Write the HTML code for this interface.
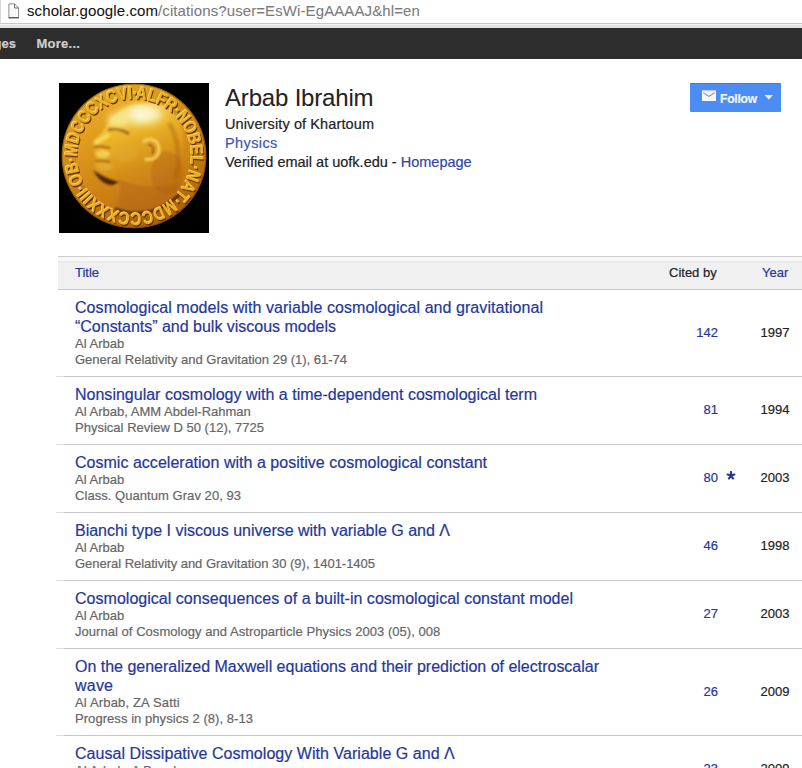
<!DOCTYPE html>
<html><head><meta charset="utf-8">
<style>
html,body{margin:0;padding:0;background:#fff;width:802px;height:768px;overflow:hidden;position:relative;font-family:"Liberation Sans",sans-serif;}
.abs{position:absolute;white-space:nowrap;-webkit-text-stroke:0.2px currentColor;}
#addr{position:absolute;left:0;top:0;width:802px;height:23px;background:#fff;}
#addr .lb{position:absolute;left:0;top:0;width:1px;height:23px;background:#d8d8d8;}
#l1{position:absolute;left:0;top:23px;width:802px;height:1px;background:#c8c8c8;}
#l2{position:absolute;left:0;top:24px;width:802px;height:1px;background:#f4f4f4;}
#l3{position:absolute;left:0;top:25px;width:802px;height:3px;background:#e2e2e2;}
#bar{position:absolute;left:0;top:28px;width:802px;height:31px;background:#2d2d2d;}
#bar .t{position:absolute;top:0px;line-height:31px;-webkit-text-stroke:0.2px currentColor;font-size:13px;font-weight:bold;color:#cfcfcf;}
.url{font-size:15px;line-height:17px;top:2px;letter-spacing:0.1px;-webkit-text-stroke:0.05px currentColor;}
.hd{position:absolute;left:58px;top:256px;width:744px;height:32px;background:linear-gradient(#f7f7f7 0,#f7f7f7 4px,#ebebeb 4px,#ebebeb 6px,#f0f0f0 6px);border-top:1px solid #cdcdcd;border-bottom:1px solid #c8c8c8;}
.hd span{position:absolute;top:0;line-height:32px;font-size:13px;-webkit-text-stroke:0.2px currentColor;}
.sep{position:absolute;left:56px;width:746px;height:1px;background:linear-gradient(90deg,#e0e0e0 0,#e0e0e0 8px,#c9c9c9 8px);}
.ti{font-size:16px;line-height:19px;color:#24379a;}
.au{font-size:13px;line-height:16px;color:#666;}
.num{font-size:13px;line-height:16px;color:#24379a;text-align:right;}
.yr{font-size:13px;line-height:16px;color:#222;text-align:right;}
</style></head><body>
<div id="addr"><div class="lb"></div>
<svg class="abs" style="left:8px;top:2.5px" width="12" height="16" viewBox="0 0 12 16"><path d="M0.9 0.9 H6.6 L10.6 5 V14.6 H0.9 Z" fill="#fdfdfd" stroke="#8a8a8a" stroke-width="1"/><path d="M6.6 0.9 V5 H10.6" fill="none" stroke="#6a6a6a" stroke-width="1"/><path d="M0.6 14.8 H10.9" stroke="#505050" stroke-width="1.2"/><path d="M3 5 V13 M5 5 V13 M7.5 6 V13" stroke="#eeeeee" stroke-width="0.8"/></svg>
<div class="abs url" style="left:27px;color:#111">scholar.google.com<span style="color:#7a7a7a">/citations?user=EsWi-EgAAAAJ&amp;hl=en</span></div>
</div>
<div id="l1"></div><div id="l2"></div><div id="l3"></div>
<div id="bar"><span class="t" style="left:-6.5px">ges</span><span class="t" style="left:36.5px;letter-spacing:0.25px">More...</span></div>
<svg class="abs" style="left:59px;top:83px" width="150" height="150" viewBox="0 0 150 150">
<defs>
<linearGradient id="cg" x1="0.3" y1="0" x2="0.7" y2="1">
<stop offset="0" stop-color="#eeb428"/>
<stop offset="0.45" stop-color="#d89018"/>
<stop offset="0.8" stop-color="#c47612"/>
<stop offset="1" stop-color="#ac600c"/>
</linearGradient>
<linearGradient id="hg" x1="0.2" y1="0" x2="0.5" y2="1">
<stop offset="0" stop-color="#fae468"/>
<stop offset="0.3" stop-color="#eeb82a"/>
<stop offset="0.65" stop-color="#d48e18"/>
<stop offset="1" stop-color="#bc7212"/>
</linearGradient>
<radialGradient id="hl" cx="0.5" cy="0.5" r="0.5">
<stop offset="0" stop-color="#fdfce8" stop-opacity="1"/>
<stop offset="0.5" stop-color="#f8eaa0" stop-opacity="0.85"/>
<stop offset="1" stop-color="#f0c848" stop-opacity="0"/>
</radialGradient>
<filter id="bl" x="-20%" y="-20%" width="140%" height="140%"><feGaussianBlur stdDeviation="1.0"/></filter>
<filter id="bs" x="-5%" y="-5%" width="110%" height="110%"><feGaussianBlur stdDeviation="0.45"/></filter>
<filter id="bl2" x="-30%" y="-30%" width="160%" height="160%"><feGaussianBlur stdDeviation="3"/></filter>
<clipPath id="cc"><circle cx="75" cy="73" r="72.5"/></clipPath>
</defs>
<rect width="150" height="150" fill="#000"/>
<g clip-path="url(#cc)">
<circle cx="75" cy="73" r="72.5" fill="url(#cg)"/>
<g filter="url(#bl)">
<path d="M48 42 C58 24 82 16 104 22 C120 30 127 48 124 68 C121 84 119 98 122 112 C108 126 82 132 56 126 C60 116 60 104 52 98 C44 96 38 92 35 86 C36 80 37 76 36 72 C34 70 35 67 37 65 C34 63 32 60 35 57 C39 54 42 50 44 48 C45 46 46 44 48 42 Z" fill="url(#hg)" opacity="0.9"/>
<path d="M60 96 C76 104 100 106 120 100 L122 112 C108 126 82 132 56 126 C60 116 62 104 60 96 Z" fill="#b86814" opacity="0.55"/>
<path d="M34 86 C42 93 52 96 60 99 C52 106 40 100 34 86 Z" fill="#4a1e02" opacity="0.95"/>
<path d="M56 126 C70 131 90 132 105 123 C112 119 117 115 121 111" fill="none" stroke="#4a2004" stroke-width="2.8" opacity="0.95"/>
<path d="M49 47 C56 45 64 47 70 51" fill="none" stroke="#8a4410" stroke-width="3" opacity="0.75"/>
<path d="M35 64 C40 63 46 64 51 65" fill="none" stroke="#7a3a0a" stroke-width="2" opacity="0.7"/>
<path d="M36 78 C41 77 46 78 51 79" fill="none" stroke="#8a4410" stroke-width="2" opacity="0.6"/>
<path d="M50 51 C46 55 40 58 36 60" fill="none" stroke="#f6d458" stroke-width="4.5"/>
<ellipse cx="44" cy="71" rx="7" ry="4" fill="#f2d056" opacity="0.9"/>
<ellipse cx="46" cy="84" rx="8" ry="3.5" fill="#e8b040" opacity="0.6"/>
<ellipse cx="66" cy="70" rx="13" ry="9" fill="#e6ac34" opacity="0.35"/>
<ellipse cx="108" cy="90" rx="16" ry="22" fill="#a85a10" opacity="0.3"/>
<path d="M84 59 C90 54 100 56 100 66 C100 74 94 78 86 76" fill="none" stroke="#f8d460" stroke-width="2.6"/>
<path d="M89 62 C93 61 96 65 93 71" fill="none" stroke="#7a3e0c" stroke-width="2" opacity="0.7"/>
<path d="M110 40 C120 56 122 78 116 96" fill="none" stroke="#9a5212" stroke-width="5" opacity="0.3"/>
</g>
<ellipse cx="82" cy="32" rx="32" ry="15" fill="url(#hl)" filter="url(#bl2)"/>
<ellipse cx="86" cy="30" rx="15" ry="7" fill="#fcf8d8" opacity="0.6" filter="url(#bl2)"/>
<ellipse cx="59" cy="37" rx="11" ry="7" fill="#f8e890" opacity="0.9" filter="url(#bl2)"/>
<circle cx="75" cy="73" r="65" fill="none" stroke="#000" stroke-opacity="0.06" stroke-width="14"/>
<g font-family="Liberation Sans" font-weight="bold" font-size="18" text-anchor="middle">
<g fill="#5a2804" opacity="0.95" filter="url(#bs)"><text x="0" y="0" transform="translate(83.01,17.75) rotate(7.2) scale(0.822,1)">A</text><text x="0" y="0" transform="translate(92.64,19.81) rotate(17.1) scale(0.822,1)">L</text><text x="0" y="0" transform="translate(101.04,23.14) rotate(26.2) scale(0.822,1)">F</text><text x="0" y="0" transform="translate(109.47,28.23) rotate(36.1) scale(0.822,1)">R</text><text x="0" y="0" transform="translate(115.44,33.25) rotate(43.9) scale(0.822,1)">&#183;</text><text x="0" y="0" transform="translate(120.68,39.03) rotate(51.8) scale(0.822,1)">N</text><text x="0" y="0" transform="translate(126.65,48.36) rotate(62.9) scale(0.822,1)">O</text><text x="0" y="0" transform="translate(130.71,58.67) rotate(74.1) scale(0.822,1)">B</text><text x="0" y="0" transform="translate(132.63,68.75) rotate(84.4) scale(0.822,1)">E</text><text x="0" y="0" transform="translate(132.77,78.19) rotate(93.9) scale(0.822,1)">L</text><text x="0" y="0" transform="translate(131.87,85.11) rotate(100.9) scale(0.822,1)">&#183;</text><text x="0" y="0" transform="translate(129.87,92.65) rotate(108.8) scale(0.822,1)">N</text><text x="0" y="0" transform="translate(125.50,102.39) rotate(119.5) scale(0.822,1)">A</text><text x="0" y="0" transform="translate(119.92,110.51) rotate(129.4) scale(0.822,1)">T</text><text x="0" y="0" transform="translate(115.17,115.61) rotate(136.5) scale(0.822,1)">&#183;</text><text x="0" y="0" transform="translate(108.49,121.06) rotate(145.1) scale(0.822,1)">M</text><text x="0" y="0" transform="translate(98.46,126.65) rotate(156.7) scale(0.822,1)">D</text><text x="0" y="0" transform="translate(88.31,129.93) rotate(167.4) scale(0.822,1)">C</text><text x="0" y="0" transform="translate(77.72,131.27) rotate(178.2) scale(0.822,1)">C</text><text x="0" y="0" transform="translate(67.07,130.61) rotate(188.9) scale(0.822,1)">C</text><text x="0" y="0" transform="translate(57.12,128.12) rotate(199.2) scale(0.822,1)">X</text><text x="0" y="0" transform="translate(48.13,124.08) rotate(209.2) scale(0.822,1)">X</text><text x="0" y="0" transform="translate(39.97,118.55) rotate(219.1) scale(0.822,1)">X</text><text x="0" y="0" transform="translate(34.82,113.82) rotate(226.1) scale(0.822,1)">I</text><text x="0" y="0" transform="translate(32.08,110.76) rotate(230.2) scale(0.822,1)">I</text><text x="0" y="0" transform="translate(29.57,107.50) rotate(234.4) scale(0.822,1)">I</text><text x="0" y="0" transform="translate(27.09,103.73) rotate(238.9) scale(0.822,1)">&#183;</text><text x="0" y="0" transform="translate(23.36,96.41) rotate(247.2) scale(0.822,1)">O</text><text x="0" y="0" transform="translate(20.08,85.83) rotate(258.3) scale(0.822,1)">B</text><text x="0" y="0" transform="translate(19.03,78.10) rotate(266.2) scale(0.822,1)">&#183;</text><text x="0" y="0" transform="translate(19.10,69.48) rotate(274.8) scale(0.822,1)">M</text><text x="0" y="0" transform="translate(21.22,58.20) rotate(286.4) scale(0.822,1)">D</text><text x="0" y="0" transform="translate(25.18,48.29) rotate(297.2) scale(0.822,1)">C</text><text x="0" y="0" transform="translate(30.92,39.29) rotate(307.9) scale(0.822,1)">C</text><text x="0" y="0" transform="translate(38.23,31.52) rotate(318.6) scale(0.822,1)">C</text><text x="0" y="0" transform="translate(46.51,25.46) rotate(329.0) scale(0.822,1)">X</text><text x="0" y="0" transform="translate(55.75,20.98) rotate(339.3) scale(0.822,1)">C</text><text x="0" y="0" transform="translate(65.63,18.23) rotate(349.6) scale(0.822,1)">V</text><text x="0" y="0" transform="translate(72.57,17.40) rotate(356.6) scale(0.822,1)">I</text><text x="0" y="0" transform="translate(77.09,17.31) rotate(361.2) scale(0.822,1)">&#183;</text></g>
<g fill="#ffe470"  filter="url(#bs)"><text x="0" y="0" transform="translate(81.61,15.75) rotate(7.2) scale(0.822,1)">A</text><text x="0" y="0" transform="translate(91.24,17.81) rotate(17.1) scale(0.822,1)">L</text><text x="0" y="0" transform="translate(99.64,21.14) rotate(26.2) scale(0.822,1)">F</text><text x="0" y="0" transform="translate(108.07,26.23) rotate(36.1) scale(0.822,1)">R</text><text x="0" y="0" transform="translate(114.04,31.25) rotate(43.9) scale(0.822,1)">&#183;</text><text x="0" y="0" transform="translate(119.28,37.03) rotate(51.8) scale(0.822,1)">N</text><text x="0" y="0" transform="translate(125.25,46.36) rotate(62.9) scale(0.822,1)">O</text><text x="0" y="0" transform="translate(129.31,56.67) rotate(74.1) scale(0.822,1)">B</text><text x="0" y="0" transform="translate(131.23,66.75) rotate(84.4) scale(0.822,1)">E</text><text x="0" y="0" transform="translate(131.37,76.19) rotate(93.9) scale(0.822,1)">L</text><text x="0" y="0" transform="translate(130.47,83.11) rotate(100.9) scale(0.822,1)">&#183;</text><text x="0" y="0" transform="translate(128.47,90.65) rotate(108.8) scale(0.822,1)">N</text><text x="0" y="0" transform="translate(124.10,100.39) rotate(119.5) scale(0.822,1)">A</text><text x="0" y="0" transform="translate(118.52,108.51) rotate(129.4) scale(0.822,1)">T</text><text x="0" y="0" transform="translate(113.77,113.61) rotate(136.5) scale(0.822,1)">&#183;</text><text x="0" y="0" transform="translate(107.09,119.06) rotate(145.1) scale(0.822,1)">M</text><text x="0" y="0" transform="translate(97.06,124.65) rotate(156.7) scale(0.822,1)">D</text><text x="0" y="0" transform="translate(86.91,127.93) rotate(167.4) scale(0.822,1)">C</text><text x="0" y="0" transform="translate(76.32,129.27) rotate(178.2) scale(0.822,1)">C</text><text x="0" y="0" transform="translate(65.67,128.61) rotate(188.9) scale(0.822,1)">C</text><text x="0" y="0" transform="translate(55.72,126.12) rotate(199.2) scale(0.822,1)">X</text><text x="0" y="0" transform="translate(46.73,122.08) rotate(209.2) scale(0.822,1)">X</text><text x="0" y="0" transform="translate(38.57,116.55) rotate(219.1) scale(0.822,1)">X</text><text x="0" y="0" transform="translate(33.42,111.82) rotate(226.1) scale(0.822,1)">I</text><text x="0" y="0" transform="translate(30.68,108.76) rotate(230.2) scale(0.822,1)">I</text><text x="0" y="0" transform="translate(28.17,105.50) rotate(234.4) scale(0.822,1)">I</text><text x="0" y="0" transform="translate(25.69,101.73) rotate(238.9) scale(0.822,1)">&#183;</text><text x="0" y="0" transform="translate(21.96,94.41) rotate(247.2) scale(0.822,1)">O</text><text x="0" y="0" transform="translate(18.68,83.83) rotate(258.3) scale(0.822,1)">B</text><text x="0" y="0" transform="translate(17.63,76.10) rotate(266.2) scale(0.822,1)">&#183;</text><text x="0" y="0" transform="translate(17.70,67.48) rotate(274.8) scale(0.822,1)">M</text><text x="0" y="0" transform="translate(19.82,56.20) rotate(286.4) scale(0.822,1)">D</text><text x="0" y="0" transform="translate(23.78,46.29) rotate(297.2) scale(0.822,1)">C</text><text x="0" y="0" transform="translate(29.52,37.29) rotate(307.9) scale(0.822,1)">C</text><text x="0" y="0" transform="translate(36.83,29.52) rotate(318.6) scale(0.822,1)">C</text><text x="0" y="0" transform="translate(45.11,23.46) rotate(329.0) scale(0.822,1)">X</text><text x="0" y="0" transform="translate(54.35,18.98) rotate(339.3) scale(0.822,1)">C</text><text x="0" y="0" transform="translate(64.23,16.23) rotate(349.6) scale(0.822,1)">V</text><text x="0" y="0" transform="translate(71.17,15.40) rotate(356.6) scale(0.822,1)">I</text><text x="0" y="0" transform="translate(75.69,15.31) rotate(361.2) scale(0.822,1)">&#183;</text></g>
<g fill="#eaac24"  filter="url(#bs)"><text x="0" y="0" transform="translate(82.11,16.45) rotate(7.2) scale(0.822,1)">A</text><text x="0" y="0" transform="translate(91.74,18.51) rotate(17.1) scale(0.822,1)">L</text><text x="0" y="0" transform="translate(100.14,21.84) rotate(26.2) scale(0.822,1)">F</text><text x="0" y="0" transform="translate(108.57,26.93) rotate(36.1) scale(0.822,1)">R</text><text x="0" y="0" transform="translate(114.54,31.95) rotate(43.9) scale(0.822,1)">&#183;</text><text x="0" y="0" transform="translate(119.78,37.73) rotate(51.8) scale(0.822,1)">N</text><text x="0" y="0" transform="translate(125.75,47.06) rotate(62.9) scale(0.822,1)">O</text><text x="0" y="0" transform="translate(129.81,57.37) rotate(74.1) scale(0.822,1)">B</text><text x="0" y="0" transform="translate(131.73,67.45) rotate(84.4) scale(0.822,1)">E</text><text x="0" y="0" transform="translate(131.87,76.89) rotate(93.9) scale(0.822,1)">L</text><text x="0" y="0" transform="translate(130.97,83.81) rotate(100.9) scale(0.822,1)">&#183;</text><text x="0" y="0" transform="translate(128.97,91.35) rotate(108.8) scale(0.822,1)">N</text><text x="0" y="0" transform="translate(124.60,101.09) rotate(119.5) scale(0.822,1)">A</text><text x="0" y="0" transform="translate(119.02,109.21) rotate(129.4) scale(0.822,1)">T</text><text x="0" y="0" transform="translate(114.27,114.31) rotate(136.5) scale(0.822,1)">&#183;</text><text x="0" y="0" transform="translate(107.59,119.76) rotate(145.1) scale(0.822,1)">M</text><text x="0" y="0" transform="translate(97.56,125.35) rotate(156.7) scale(0.822,1)">D</text><text x="0" y="0" transform="translate(87.41,128.63) rotate(167.4) scale(0.822,1)">C</text><text x="0" y="0" transform="translate(76.82,129.97) rotate(178.2) scale(0.822,1)">C</text><text x="0" y="0" transform="translate(66.17,129.31) rotate(188.9) scale(0.822,1)">C</text><text x="0" y="0" transform="translate(56.22,126.82) rotate(199.2) scale(0.822,1)">X</text><text x="0" y="0" transform="translate(47.23,122.78) rotate(209.2) scale(0.822,1)">X</text><text x="0" y="0" transform="translate(39.07,117.25) rotate(219.1) scale(0.822,1)">X</text><text x="0" y="0" transform="translate(33.92,112.52) rotate(226.1) scale(0.822,1)">I</text><text x="0" y="0" transform="translate(31.18,109.46) rotate(230.2) scale(0.822,1)">I</text><text x="0" y="0" transform="translate(28.67,106.20) rotate(234.4) scale(0.822,1)">I</text><text x="0" y="0" transform="translate(26.19,102.43) rotate(238.9) scale(0.822,1)">&#183;</text><text x="0" y="0" transform="translate(22.46,95.11) rotate(247.2) scale(0.822,1)">O</text><text x="0" y="0" transform="translate(19.18,84.53) rotate(258.3) scale(0.822,1)">B</text><text x="0" y="0" transform="translate(18.13,76.80) rotate(266.2) scale(0.822,1)">&#183;</text><text x="0" y="0" transform="translate(18.20,68.18) rotate(274.8) scale(0.822,1)">M</text><text x="0" y="0" transform="translate(20.32,56.90) rotate(286.4) scale(0.822,1)">D</text><text x="0" y="0" transform="translate(24.28,46.99) rotate(297.2) scale(0.822,1)">C</text><text x="0" y="0" transform="translate(30.02,37.99) rotate(307.9) scale(0.822,1)">C</text><text x="0" y="0" transform="translate(37.33,30.22) rotate(318.6) scale(0.822,1)">C</text><text x="0" y="0" transform="translate(45.61,24.16) rotate(329.0) scale(0.822,1)">X</text><text x="0" y="0" transform="translate(54.85,19.68) rotate(339.3) scale(0.822,1)">C</text><text x="0" y="0" transform="translate(64.73,16.93) rotate(349.6) scale(0.822,1)">V</text><text x="0" y="0" transform="translate(71.67,16.10) rotate(356.6) scale(0.822,1)">I</text><text x="0" y="0" transform="translate(76.19,16.01) rotate(361.2) scale(0.822,1)">&#183;</text></g>
</g>
<circle cx="75" cy="73" r="72" fill="none" stroke="#7a4008" stroke-width="1.6" opacity="0.6" filter="url(#bs)"/>
</g>
</svg>

<div class="abs" style="left:225px;top:84px;font-size:24px;line-height:28px;color:#222;letter-spacing:-0.18px;-webkit-text-stroke:0.05px #222">Arbab Ibrahim</div>
<div class="abs" style="left:225px;top:114.5px;font-size:14.5px;line-height:19.5px;color:#222;letter-spacing:0.11px">University of Khartoum</div>
<div class="abs" style="left:225px;top:133.5px;font-size:14.5px;line-height:19.5px;color:#3b57b5;letter-spacing:0.4px">Physics</div>
<div class="abs" style="left:225px;top:153px;font-size:14.5px;line-height:19.5px;color:#222">Verified email at uofk.edu - <span style="color:#2f48a8">Homepage</span></div>
<div class="abs" style="left:690px;top:83px;width:91px;height:29px;background:#4c8df4;border-top:1px solid #3c7ae6;box-sizing:border-box;border-radius:1px"></div>
<svg class="abs" style="left:702px;top:90px" width="15" height="12" viewBox="0 0 15 12"><rect x="0" y="0" width="14" height="11" fill="#f6f8fc"/><rect x="0" y="0" width="14" height="1.2" fill="#b8c8f0"/><path d="M1.2 2.6 L7 6.4 L12.8 2.6" fill="none" stroke="#8c8aa8" stroke-width="1.1"/></svg>
<div class="abs" style="left:720px;top:91.5px;font-size:12px;line-height:14px;font-weight:bold;color:#f4f6fb;letter-spacing:-0.2px">Follow</div>
<svg class="abs" style="left:764px;top:95px" width="10" height="5" viewBox="0 0 10 5"><path d="M0.5 0 L9 0 L4.75 4.5 Z" fill="#e8eefa"/></svg>
<div class="hd"><span style="left:17px;color:#24379a">Title</span><span style="left:611px;color:#222">Cited by</span><span style="left:704px;color:#24379a">Year</span></div>
<div class="abs ti" style="left:75px;top:297.5px"><span style="letter-spacing:0.060px">Cosmological models with variable cosmological and gravitational</span><br><span style="letter-spacing:-0.013px">“Constants” and bulk viscous models</span></div>
<div class="abs au" style="left:75px;top:335.5px"><span style="letter-spacing:0.020px">Al Arbab</span></div>
<div class="abs au" style="left:75px;top:351.5px"><span style="letter-spacing:-0.009px">General Relativity and Gravitation 29 (1), 61-74</span></div>
<div class="abs num" style="right:84px;top:324.5px">142</div>
<div class="abs yr" style="right:12.5px;top:324.5px">1997</div>
<div class="sep" style="top:376px"></div>
<div class="abs ti" style="left:75px;top:384.5px"><span style="letter-spacing:0.007px">Nonsingular cosmology with a time-dependent cosmological term</span></div>
<div class="abs au" style="left:75px;top:403.5px"><span style="letter-spacing:0.010px">Al Arbab, AMM Abdel-Rahman</span></div>
<div class="abs au" style="left:75px;top:419.5px"><span style="letter-spacing:0.014px">Physical Review D 50 (12), 7725</span></div>
<div class="abs num" style="right:84px;top:402.0px">81</div>
<div class="abs yr" style="right:12.5px;top:402.0px">1994</div>
<div class="sep" style="top:444px"></div>
<div class="abs ti" style="left:75px;top:452.5px"><span style="letter-spacing:0.021px">Cosmic acceleration with a positive cosmological constant</span></div>
<div class="abs au" style="left:75px;top:471.5px"><span style="letter-spacing:0.020px">Al Arbab</span></div>
<div class="abs au" style="left:75px;top:487.5px"><span style="letter-spacing:0.050px">Class. Quantum Grav 20, 93</span></div>
<div class="abs num" style="right:84px;top:470.0px">80</div>
<div class="abs yr" style="right:12.5px;top:470.0px">2003</div>
<svg class="abs" style="left:725.7px;top:470.5px" width="10" height="10" viewBox="0 0 10 10"><path d="M5.00 4.60 L5.00 1.00 M5.00 4.60 L8.42 3.49 M5.00 4.60 L7.12 7.51 M5.00 4.60 L2.88 7.51 M5.00 4.60 L1.58 3.49" stroke="#24379a" stroke-width="2.1" stroke-linecap="round" fill="none"/></svg>
<div class="sep" style="top:512px"></div>
<div class="abs ti" style="left:75px;top:520.5px"><span style="letter-spacing:-0.006px">Bianchi type I viscous universe with variable G and Λ</span></div>
<div class="abs au" style="left:75px;top:539.5px"><span style="letter-spacing:0.020px">Al Arbab</span></div>
<div class="abs au" style="left:75px;top:555.5px"><span style="letter-spacing:-0.026px">General Relativity and Gravitation 30 (9), 1401-1405</span></div>
<div class="abs num" style="right:84px;top:538.0px">46</div>
<div class="abs yr" style="right:12.5px;top:538.0px">1998</div>
<div class="sep" style="top:580px"></div>
<div class="abs ti" style="left:75px;top:588.5px"><span style="letter-spacing:0.026px">Cosmological consequences of a built-in cosmological constant model</span></div>
<div class="abs au" style="left:75px;top:607.5px"><span style="letter-spacing:0.020px">Al Arbab</span></div>
<div class="abs au" style="left:75px;top:623.5px"><span style="letter-spacing:0.042px">Journal of Cosmology and Astroparticle Physics 2003 (05), 008</span></div>
<div class="abs num" style="right:84px;top:606.0px">27</div>
<div class="abs yr" style="right:12.5px;top:606.0px">2003</div>
<div class="sep" style="top:648px"></div>
<div class="abs ti" style="left:75px;top:656.5px"><span style="letter-spacing:-0.010px">On the generalized Maxwell equations and their prediction of electroscalar</span><br><span style="letter-spacing:0.216px">wave</span></div>
<div class="abs au" style="left:75px;top:694.5px"><span style="letter-spacing:0.158px">Al Arbab, ZA Satti</span></div>
<div class="abs au" style="left:75px;top:710.5px"><span style="letter-spacing:0.057px">Progress in physics 2 (8), 8-13</span></div>
<div class="abs num" style="right:84px;top:683.5px">26</div>
<div class="abs yr" style="right:12.5px;top:683.5px">2009</div>
<div class="sep" style="top:735px"></div>
<div class="abs ti" style="left:75px;top:743.5px"><span style="letter-spacing:0.044px">Causal Dissipative Cosmology With Variable G and Λ</span></div>
<div class="abs au" style="left:75px;top:762.5px"><span style="letter-spacing:0.095px">Al Arbab, A Beesham</span></div>
<div class="abs num" style="right:84px;top:761.0px">23</div>
<div class="abs yr" style="right:12.5px;top:761.0px">2009</div>
</body></html>
